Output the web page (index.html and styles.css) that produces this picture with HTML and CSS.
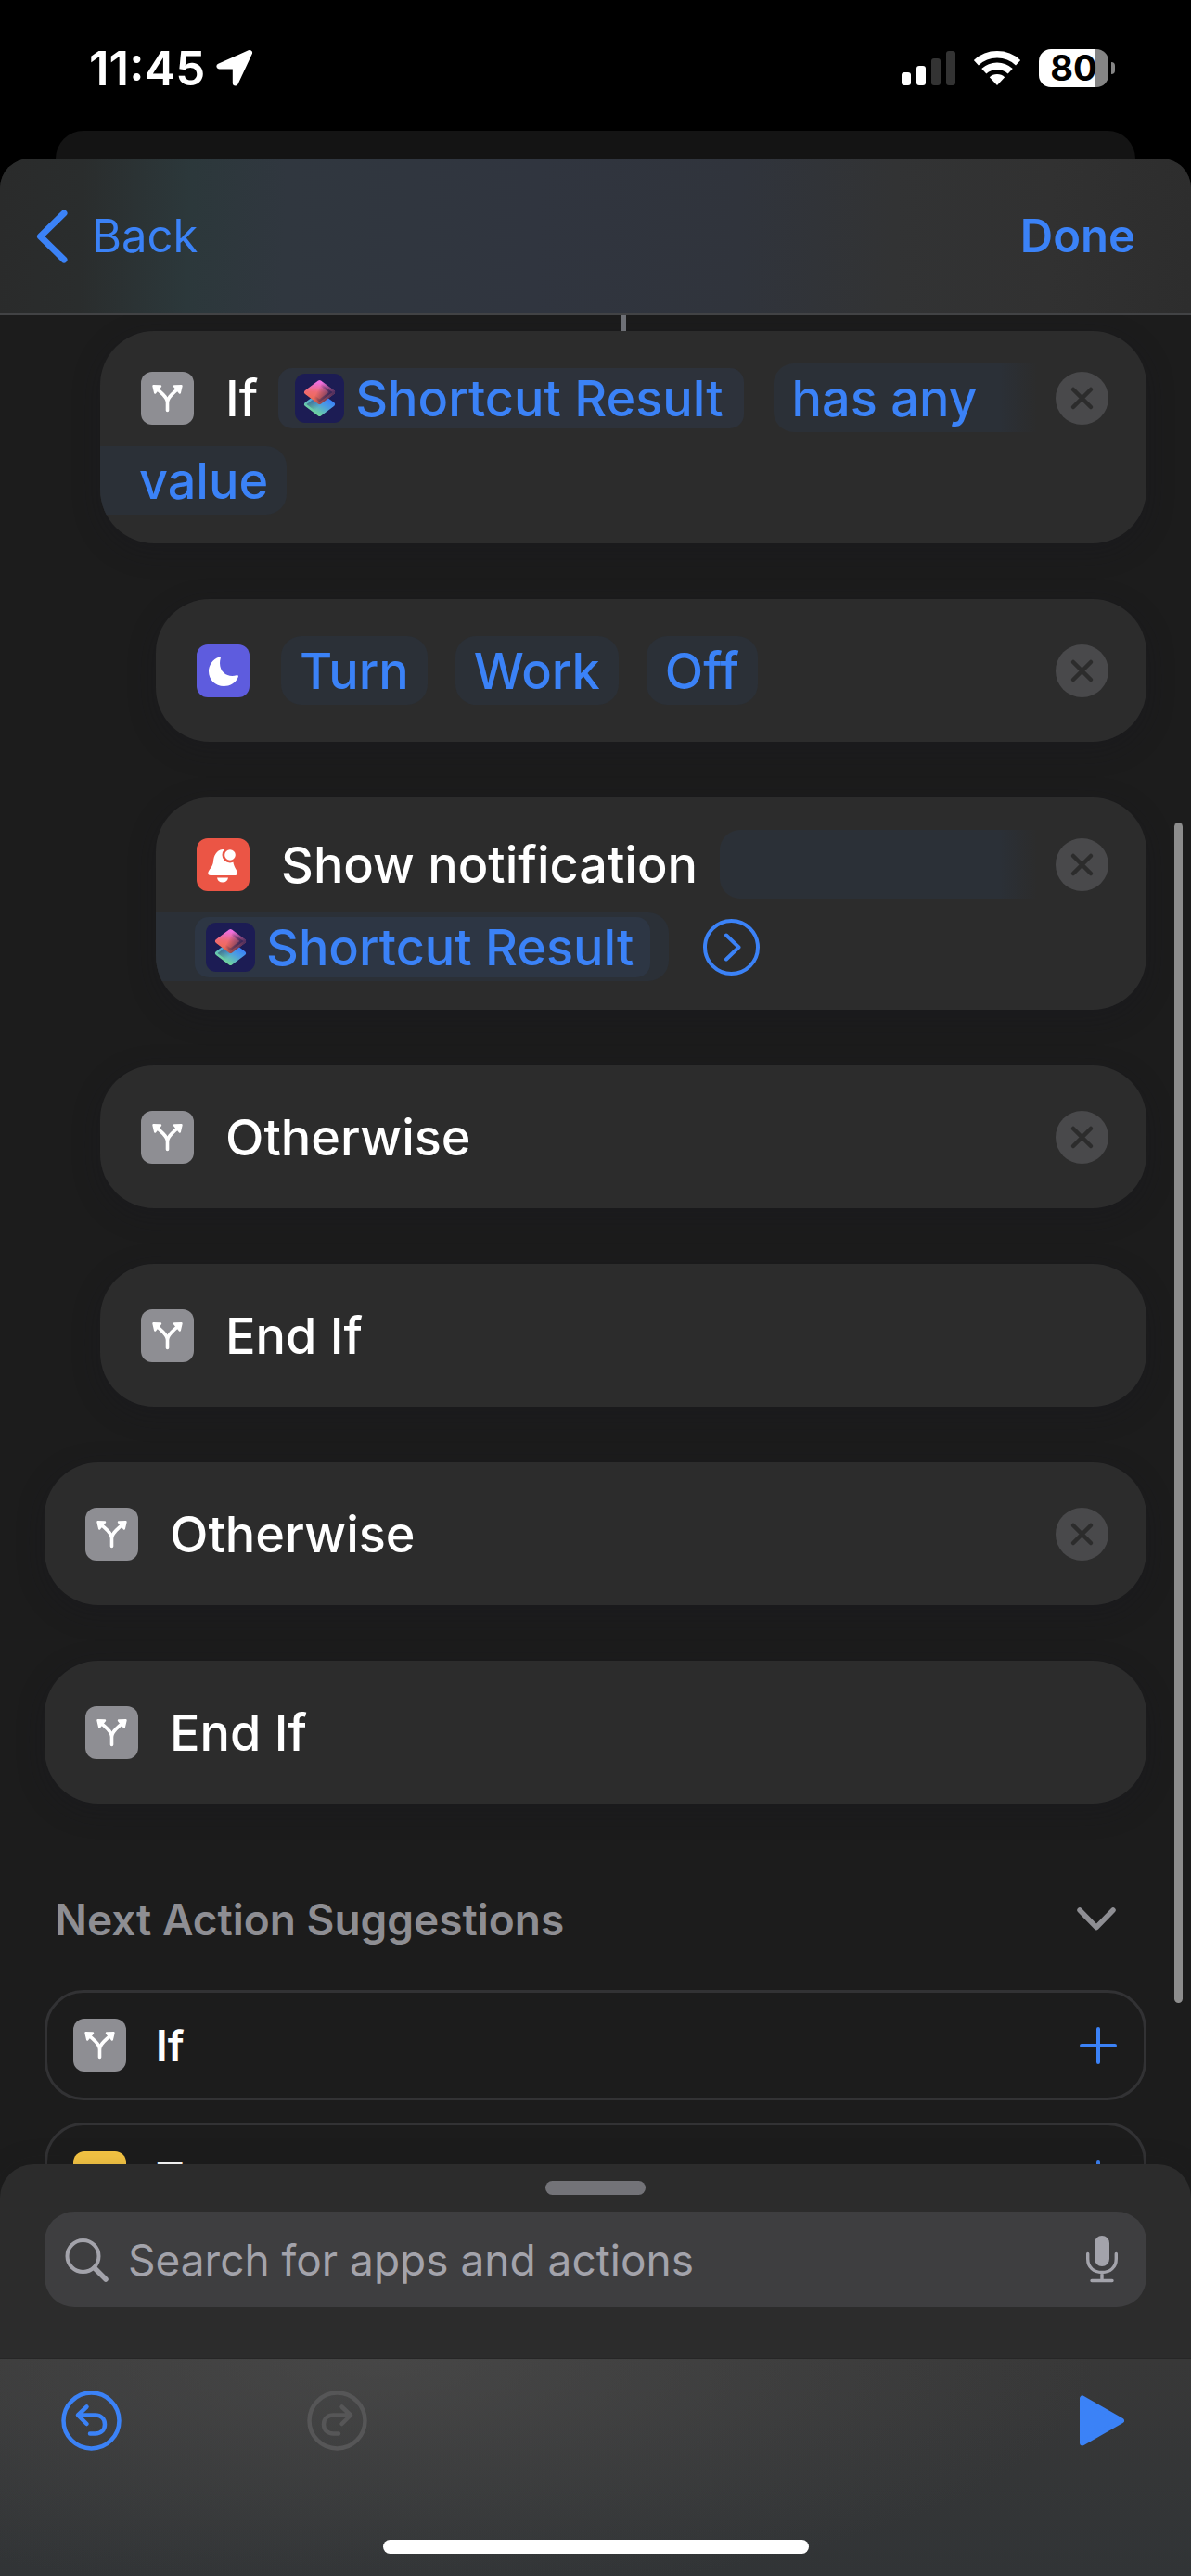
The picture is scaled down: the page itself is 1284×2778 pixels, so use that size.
FILE: index.html
```html
<!DOCTYPE html>
<html lang="en">
<head>
<meta charset="utf-8">
<meta name="viewport" content="width=device-width, initial-scale=1">
<title>Shortcut Editor</title>
<link rel="stylesheet" href="styles.css">
</head>
<body>
<svg class="defs" aria-hidden="true">
  <defs>
    <linearGradient id="warm" x1="0.5" y1="0" x2="0.4" y2="1">
      <stop offset="0" stop-color="#ee6fe0"/><stop offset="0.5" stop-color="#ef6a72"/><stop offset="1" stop-color="#ee6a4c"/>
    </linearGradient>
    <linearGradient id="shade" x1="0.35" y1="0.4" x2="1" y2="0.65">
      <stop offset="0.1" stop-color="#1c1c54" stop-opacity="0"/><stop offset="1" stop-color="#1c1c54" stop-opacity="0.75"/>
    </linearGradient>
    <linearGradient id="cool" x1="0.9" y1="0.3" x2="0.35" y2="1">
      <stop offset="0" stop-color="#3b82f7"/><stop offset="0.4" stop-color="#4c9ee0"/><stop offset="1" stop-color="#72d69a"/>
    </linearGradient>
    <linearGradient id="shade2" x1="0" y1="0.2" x2="0.5" y2="0.6">
      <stop offset="0" stop-color="#1c1c54" stop-opacity="0.6"/><stop offset="1" stop-color="#1c1c54" stop-opacity="0"/>
    </linearGradient>
  </defs>
  <symbol id="branch" viewBox="0 0 57 57">
    <path d="M28.500 41.500V33C28.500 27 22 23 17 18M28.500 33C28.500 27 35 23 40 18" fill="none" stroke="#fff" stroke-width="3.600" stroke-linecap="round"/>
    <path d="M13.500 15.200L21 15.400L15.200 22.500ZM43.500 15.200L36 15.400L41.800 22.500Z" fill="#fff" stroke="#fff" stroke-width="2.400" stroke-linejoin="round"/>
  </symbol>
  <symbol id="shortcuts" viewBox="0 0 53 53">
    <path d="M26.500 22.500L40.500 33L26.500 43.500L12.500 33Z" fill="url(#cool)" stroke="url(#cool)" stroke-width="5" stroke-linejoin="round"/>
    <path d="M26.500 22.500L40.500 33L26.500 43.500L12.500 33Z" fill="url(#shade2)"/>
    <path d="M26.500 9.500L40.500 20L26.500 30.500L12.500 20Z" fill="url(#warm)" stroke="url(#warm)" stroke-width="5" stroke-linejoin="round"/>
    <path d="M26.500 9.500L40.500 20L26.500 30.500L12.500 20Z" fill="url(#shade)" stroke="url(#shade)" stroke-width="5" stroke-linejoin="round"/>
  </symbol>
  <symbol id="close" viewBox="0 0 57 57">
    <circle cx="28.500" cy="28.500" r="28.500" fill="#49494b"/>
    <path d="M19 19L38 38M38 19L19 38" stroke="#2c2c2c" stroke-width="4.500" stroke-linecap="round"/>
  </symbol>
  <symbol id="plus" viewBox="0 0 40 40">
    <path d="M20 2V38M2 20H38" stroke="#3b82f7" stroke-width="4" stroke-linecap="round"/>
  </symbol>
</svg>

<div class="status">
  <span class="time">11:45</span>
  <svg class="location" width="41" height="41" viewBox="0 0 41 41"><path d="M36 4L3.500 18.500H20.800V36.500Z" fill="#fff" stroke="#fff" stroke-width="6" stroke-linejoin="round"/></svg>
  <div class="status-right">
    <svg width="58" height="38" viewBox="0 0 58 38"><g fill="#fff"><rect y="23" width="10" height="14" rx="3"/><rect x="16" y="16" width="10" height="21" rx="3"/></g><g fill="#333"><rect x="32" y="8" width="10" height="29" rx="3"/><rect x="48" width="10" height="37" rx="3"/></g></svg>
    <svg width="52" height="38" viewBox="0 0 52 38"><path d="M3.400 12.700A33.200 33.200 0 0 1 48.600 12.700M11.800 21.800A20.800 20.800 0 0 1 40.200 21.800" fill="none" stroke="#fff" stroke-width="7.500"/><path d="M17.800 28.200A12 12 0 0 1 34.200 28.200L26 37Z" fill="#fff"/></svg>
    <div class="battery"><span>80</span></div>
  </div>
</div>

<div class="behind"></div>

<div class="sheet">
  <header class="nav">
    <button class="back" type="button">
      <svg width="35" height="58" viewBox="0 0 35 58"><path d="M30 4L4.500 29L30 54" fill="none" stroke="#3b82f7" stroke-width="7" stroke-linecap="round" stroke-linejoin="round"/></svg>
      Back
    </button>
    <button class="done" type="button">Done</button>
  </header>

  <main class="editor">
    <div class="connector"></div>
    <ul class="actions">
      <li class="card level-1 tall">
        <div class="row">
          <span class="tile"><svg><use href="#branch"/></svg></span>
          <span class="word">If</span>
          <button class="variable" type="button"><span class="mini"><svg><use href="#shortcuts"/></svg></span>Shortcut Result</button>
          <button class="chip open" type="button">has any</button>
          <button class="remove" type="button" aria-label="Remove If"><svg><use href="#close"/></svg></button>
        </div>
        <div class="row">
          <button class="chip rest" type="button">value</button>
        </div>
      </li>

      <li class="card level-2">
        <div class="row">
          <span class="tile focus"><svg viewBox="0 0 57 57"><path d="M24.500 13.500C17 16 13 22.500 13 29C13 38 20 45 29.500 45C36.500 45 42.500 41 44.800 35C45.200 33.500 44.500 32.800 43 33.300C33 36.500 22 29 25.800 14.800C26.100 13.600 25.600 13.200 24.500 13.500Z" fill="#fff"/></svg></span>
          <span class="chips">
            <button class="chip" type="button">Turn</button>
            <button class="chip" type="button">Work</button>
            <button class="chip" type="button">Off</button>
          </span>
          <button class="remove" type="button" aria-label="Remove Turn Work Off"><svg><use href="#close"/></svg></button>
        </div>
      </li>

      <li class="card level-2 tall">
        <div class="row">
          <span class="tile alert"><svg viewBox="0 0 57 57"><path d="M28 12C21 13 18.500 19 18 25C17.600 31 12.500 34 12.300 37.500Q12.300 40 15 40H41.500Q44 40 44 37.500C43.800 34.500 40 31 39.400 25.500L38 20L30 12Z" fill="#fff"/><circle cx="36" cy="18" r="8.500" fill="#eb5545"/><circle cx="36" cy="18" r="5.800" fill="#fff"/><path d="M22 42.500H34Q33 47.500 28 47.500Q23 47.500 22 42.500Z" fill="#fff"/></svg></span>
          <span class="word">Show notification</span>
          <button class="chip open" type="button" aria-label="Notification text"></button>
          <button class="remove" type="button" aria-label="Remove Show notification"><svg><use href="#close"/></svg></button>
        </div>
        <div class="row">
          <span class="chip rest holder"><button class="variable nested" type="button"><span class="mini"><svg><use href="#shortcuts"/></svg></span>Shortcut Result</button></span>
          <button class="more" type="button" aria-label="Show more"><svg viewBox="0 0 61 61"><circle cx="30.500" cy="30.500" r="28.500" fill="none" stroke="#3b82f7" stroke-width="4"/><path d="M25 17.500L38.500 30.500L25 43.500" fill="none" stroke="#3b82f7" stroke-width="4" stroke-linecap="round" stroke-linejoin="round"/></svg></button>
        </div>
      </li>

      <li class="card level-1">
        <div class="row">
          <span class="tile"><svg><use href="#branch"/></svg></span>
          <span class="word">Otherwise</span>
          <button class="remove" type="button" aria-label="Remove Otherwise"><svg><use href="#close"/></svg></button>
        </div>
      </li>
      <li class="card level-1">
        <div class="row">
          <span class="tile"><svg><use href="#branch"/></svg></span>
          <span class="word">End If</span>
        </div>
      </li>
      <li class="card">
        <div class="row">
          <span class="tile"><svg><use href="#branch"/></svg></span>
          <span class="word">Otherwise</span>
          <button class="remove" type="button" aria-label="Remove Otherwise"><svg><use href="#close"/></svg></button>
        </div>
      </li>
      <li class="card">
        <div class="row">
          <span class="tile"><svg><use href="#branch"/></svg></span>
          <span class="word">End If</span>
        </div>
      </li>
    </ul>

    <div class="suggest-head">
      <h2>Next Action Suggestions</h2>
      <button type="button" aria-label="Collapse suggestions"><svg width="44" height="28" viewBox="0 0 44 28"><path d="M4 4L22 22.500L40 4" fill="none" stroke="#8e8e93" stroke-width="5.500" stroke-linecap="round" stroke-linejoin="round"/></svg></button>
    </div>
    <ul class="suggestions">
      <li>
        <span class="tile"><svg><use href="#branch"/></svg></span>
        <span>If</span>
        <button type="button" aria-label="Add If"><svg><use href="#plus"/></svg></button>
      </li>
      <li>
        <span class="tile text"></span>
        <span>Text</span>
        <button type="button" aria-label="Add Text"><svg><use href="#plus"/></svg></button>
      </li>
    </ul>
    <div class="scrollbar"></div>
  </main>

  <section class="drawer">
    <div class="grabber"></div>
    <label class="search">
      <svg width="48" height="48" viewBox="0 0 48 48"><g fill="none" stroke="#a3a3ab" stroke-linecap="round"><circle cx="19.500" cy="20" r="17" stroke-width="4"/><path d="M32 33L44 45" stroke-width="5.500"/></g></svg>
      <input type="search" placeholder="Search for apps and actions" aria-label="Search for apps and actions">
      <svg width="34" height="51" viewBox="0 0 34 51"><rect x="9" width="16" height="33" rx="8" fill="#a3a3ab"/><path d="M1.700 19.500V25C1.700 34 8 39.500 17 39.500S32.300 34 32.300 25V19.500M17 40V48M6 48.500H28" fill="none" stroke="#a3a3ab" stroke-width="3.400" stroke-linecap="round"/></svg>
    </label>
  </section>

  <footer class="toolbar">
    <div class="tools">
      <button type="button" aria-label="Undo"><svg width="65" height="65" viewBox="0 0 65 65"><g fill="none" stroke="#3b82f7" stroke-width="4.500" stroke-linecap="round" stroke-linejoin="round"><circle cx="32.500" cy="32.500" r="30"/><path d="M27.500 17.500L18 26.500L27.500 36M19 26.500H36.500C43 26.500 47 30.500 47 36.500S43 46.500 36.500 46.500H31"/></g></svg></button>
      <button type="button" aria-label="Redo" disabled><svg width="65" height="65" viewBox="0 0 65 65"><g fill="none" stroke="#565657" stroke-width="4.500" stroke-linecap="round" stroke-linejoin="round"><circle cx="32.500" cy="32.500" r="30"/><path d="M37.500 17.500L47 26.500L37.500 36M46 26.500H28.500C22 26.500 18 30.500 18 36.500S22 46.500 28.500 46.500H34"/></g></svg></button>
      <button class="play" type="button" aria-label="Run shortcut"><svg width="48" height="55" viewBox="0 0 48 55"><path d="M3 3.500V51.500L45 27.500Z" fill="#3b82f7" stroke="#3b82f7" stroke-width="6" stroke-linejoin="round"/></svg></button>
    </div>
    <div class="home"></div>
  </footer>
</div>
</body>
</html>
```
FILE: styles.css
```css
* { box-sizing: border-box; }

html, body { height: 100%; }

body {
  margin: 0;
  display: flex;
  flex-direction: column;
  overflow: hidden;
  background: #000;
  color: #fff;
  font-family: Inter, "Liberation Sans", sans-serif;
  font-size: 54px;
}

button {
  margin: 0;
  padding: 0;
  border: 0;
  background: none;
  color: #3b82f7;
  font: inherit;
}

ul { margin: 0; padding: 0; list-style: none; }

svg { display: block; flex: none; }

.defs { position: absolute; width: 0; height: 0; }

/* Status bar */
.status {
  flex: none;
  display: flex;
  align-items: center;
  height: 141px;
  padding: 6px 89px 0 96px;
}

.time { font-size: 51px; font-weight: 600; }

.location { margin-left: 12px; }

.status-right {
  display: flex;
  align-items: center;
  gap: 19px;
  margin-left: auto;
}

.battery {
  position: relative;
  width: 75px;
  height: 41px;
  border-radius: 13px;
  background: linear-gradient(90deg, #fff 80%, #858585 80%);
  color: #000;
  font-size: 38px;
  font-weight: 700;
  line-height: 41px;
  text-align: center;
}

.battery::after {
  content: "";
  position: absolute;
  top: 14px;
  right: -7px;
  width: 4px;
  height: 13px;
  border-radius: 0 4px 4px 0;
  background: #858585;
}

.behind {
  flex: none;
  height: 60px;
  margin: 0 60px -30px;
  border-radius: 30px 30px 0 0;
  background: #141414;
}

/* Sheet */
.sheet {
  position: relative;
  flex: 1;
  min-height: 0;
  display: flex;
  flex-direction: column;
  overflow: hidden;
  border-radius: 32px 32px 0 0;
  background: #1c1c1c;
}

.nav {
  flex: none;
  display: flex;
  align-items: center;
  justify-content: space-between;
  height: 169px;
  padding: 0 60px 0 39px;
  border-bottom: 2px solid #424345;
  background: linear-gradient(92deg, #2a2b2b 0%, #2a2d2d 7%, #2c383b 16%, #30373f 24%, #30353f 45%, #30343c 62%, #323334 75%, #313131 88%, #2d2d2d 100%);
  font-size: 49px;
}

.back { display: flex; align-items: center; gap: 25px; }

.done { font-weight: 600; }

.editor {
  position: relative;
  flex: 1;
  min-height: 0;
  overflow: hidden;
  margin-bottom: -40px;
  padding: 0 48px;
}

.connector {
  width: 6px;
  height: 17px;
  margin: 0 auto;
  position: relative;
  left: 30px;
  background: #6e7076;
}

.actions { display: flex; flex-direction: column; gap: 60px; }

.card {
  overflow: hidden;
  padding: 40px 41px 40px 44px;
  border-radius: 58px;
  background: #2c2c2c;
  box-shadow: 0 8px 30px rgba(24, 24, 32, 0.3);
  font-weight: 500;
}

.level-1 { margin-left: 60px; }

.level-2 { margin-left: 120px; }

.tall {
  display: flex;
  flex-direction: column;
  gap: 15px;
  padding-top: 35px;
  padding-bottom: 31px;
}

.row { display: flex; align-items: center; height: 74px; white-space: nowrap; }

.tile {
  flex: none;
  width: 57px;
  height: 57px;
  margin-right: 34px;
  border-radius: 12px;
  background: #8e8e93;
}

.tile svg, .remove svg { width: 57px; height: 57px; }

.focus { background: #5e5cde; }

.alert { background: #eb5545; }

.text { background: #f7c644; }

.remove { flex: none; margin-left: auto; }

.chips { display: flex; gap: 30px; }

.chip {
  height: 74px;
  padding: 0 20px;
  border-radius: 22px;
  background: #2b3037;
}

.variable + .chip { margin-left: 32px; }

.word + .variable { margin-left: 22px; }

.word + .chip { margin-left: 24px; }

.open {
  flex: 1;
  margin-right: 20px;
  border-radius: 22px 0 0 22px;
  background: linear-gradient(90deg, #2b3037 calc(100% - 40px), #2c2c2c);
  text-align: left;
}

.rest {
  margin-left: -44px;
  padding-left: 42px;
  border-radius: 0 22px 22px 0;
}

.variable {
  display: flex;
  align-items: center;
  height: 65px;
  padding: 0 22px 0 18px;
  border-radius: 15px;
  background: #2d323b;
}

.mini {
  width: 53px;
  height: 53px;
  margin-right: 12px;
  border-radius: 11px;
  background: #1c1c54;
}

.mini svg { width: 53px; height: 53px; }

.holder { display: flex; align-items: center; padding: 0 20px 0 42px; }

.nested { padding: 0 18px 0 12px; background: #2d3644; }

.more { margin-left: 37px; }

.more svg { width: 61px; height: 61px; }

.suggest-head {
  display: flex;
  align-items: center;
  justify-content: space-between;
  padding: 95px 32px 46px 11px;
}

.suggest-head h2 {
  margin: 0;
  color: #8e8e93;
  font-size: 46px;
  font-weight: 600;
  line-height: 60px;
}

.suggestions { display: flex; flex-direction: column; gap: 24px; }

.suggestions li {
  display: flex;
  align-items: center;
  height: 119px;
  padding: 0 29px 0 28px;
  border: 3px solid #323234;
  border-radius: 42px;
  font-size: 46px;
  font-weight: 600;
}

.suggestions .tile { margin-right: 32px; }

.suggestions button { margin-left: auto; }

.suggestions button svg { width: 40px; height: 40px; }

.scrollbar {
  position: absolute;
  top: 547px;
  right: 9px;
  bottom: 214px;
  width: 9px;
  border-radius: 5px;
  background: #8d8d8d;
}

/* Search drawer */
.drawer {
  position: relative;
  flex: none;
  padding: 18px 48px 55px;
  border-radius: 36px 36px 0 0;
  background: #2c2c2c;
  box-shadow: 0 0 30px rgba(24, 24, 30, 0.15);
}

.grabber {
  width: 108px;
  height: 15px;
  margin: 0 auto 18px;
  border-radius: 8px;
  background: #737378;
}

.search {
  display: flex;
  align-items: center;
  gap: 20px;
  height: 103px;
  padding: 0 31px 0 22px;
  border-radius: 32px;
  background: #3e3e40;
}

.search input {
  flex: 1;
  min-width: 0;
  padding: 0;
  border: 0;
  outline: 0;
  background: none;
  color: #fff;
  font: inherit;
  font-size: 46px;
}

.search input::placeholder { color: #a3a3ab; opacity: 1; }

/* Toolbar */
.toolbar {
  position: relative;
  flex: none;
  padding: 34px 66px 24px;
  border-top: 1px solid #262626;
  background:
    radial-gradient(ellipse 60% 110% at 32% 0%, rgba(78, 78, 78, 0.65), rgba(60, 60, 60, 0) 100%),
    linear-gradient(180deg, #383838, #313436);
}

.tools { display: flex; align-items: center; gap: 200px; }

.play { margin-left: auto; padding-right: 6px; }

.home {
  width: 459px;
  height: 15px;
  margin: 96px auto 0;
  border-radius: 8px;
  background: #fff;
}
```
